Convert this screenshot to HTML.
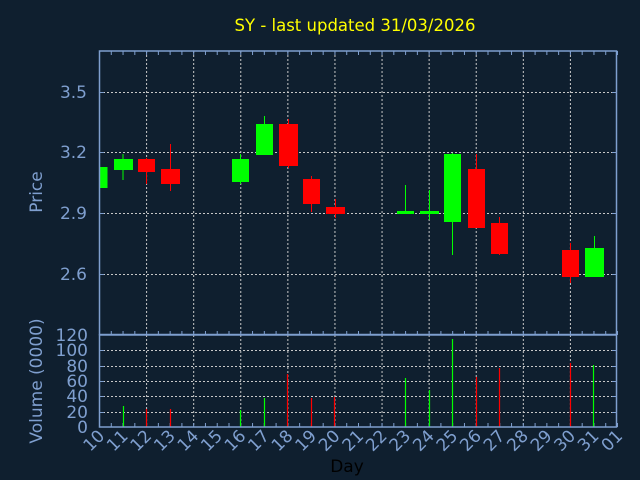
<!DOCTYPE html>
<html><head><meta charset="utf-8"><style>
html,body{margin:0;padding:0;background:#0f1f2f;}
svg{display:block;font-family:"DejaVu Sans","Liberation Sans",sans-serif;}
</style></head><body>
<svg id="s" width="640" height="480" viewBox="0 0 640 480" xmlns="http://www.w3.org/2000/svg">
<rect width="640" height="480" fill="#0f1f2f"/>
<text x="355" y="31" fill="#ffff00" font-size="16.5" text-anchor="middle">SY - last updated 31/03/2026</text>
<g id="grid" stroke="#c8c8c8" stroke-width="1" stroke-dasharray="2,2" fill="none">
<line x1="99" y1="92.5" x2="617" y2="92.5"/>
<line x1="99" y1="152.5" x2="617" y2="152.5"/>
<line x1="99" y1="213.5" x2="617" y2="213.5"/>
<line x1="99" y1="274.5" x2="617" y2="274.5"/>
<line x1="99" y1="350.5" x2="617" y2="350.5"/>
<line x1="99" y1="366.5" x2="617" y2="366.5"/>
<line x1="99" y1="381.5" x2="617" y2="381.5"/>
<line x1="99" y1="396.5" x2="617" y2="396.5"/>
<line x1="99" y1="412.5" x2="617" y2="412.5"/>
</g>
<g id="vg" stroke="#c8c8c8" stroke-width="1" stroke-dasharray="2,2"></g>
<g id="ticks" stroke="#7f9fcf" stroke-width="1"></g>
<g fill="#00ff00" stroke="#00ff00">
<rect x="99" y="167" width="8.5" height="21" stroke="none"/>
<line x1="123" y1="154" x2="123" y2="180"/><rect x="114" y="159" width="19" height="11" stroke="none"/>
<line x1="240.5" y1="154" x2="240.5" y2="184"/><rect x="232" y="159" width="17" height="23" stroke="none"/>
<line x1="264.5" y1="116" x2="264.5" y2="155"/><rect x="256" y="124" width="17" height="31" stroke="none"/>
<line x1="405.5" y1="185" x2="405.5" y2="214"/><rect x="397" y="211" width="17" height="3" stroke="none"/>
<line x1="429.5" y1="190" x2="429.5" y2="220"/><rect x="420" y="211" width="19" height="3" stroke="none"/>
<line x1="452.5" y1="153" x2="452.5" y2="255"/><rect x="444" y="154" width="17" height="68" stroke="none"/>
<line x1="594.5" y1="236" x2="594.5" y2="277"/><rect x="585" y="248" width="19" height="29" stroke="none"/>
</g>
<g fill="#ff0000" stroke="#ff0000">
<line x1="146.5" y1="158" x2="146.5" y2="184"/><rect x="138" y="159" width="17" height="13" stroke="none"/>
<line x1="170.5" y1="144" x2="170.5" y2="191"/><rect x="161" y="169" width="19" height="15" stroke="none"/>
<line x1="288.5" y1="119" x2="288.5" y2="168"/><rect x="279" y="124" width="19" height="42" stroke="none"/>
<line x1="311.5" y1="176" x2="311.5" y2="212"/><rect x="303" y="179" width="17" height="25" stroke="none"/>
<line x1="335.5" y1="199" x2="335.5" y2="218"/><rect x="326" y="207" width="19" height="7" stroke="none"/>
<line x1="476.5" y1="154" x2="476.5" y2="228"/><rect x="468" y="169" width="17" height="59" stroke="none"/>
<line x1="499.5" y1="217" x2="499.5" y2="255"/><rect x="491" y="223" width="17" height="31" stroke="none"/>
<line x1="570.5" y1="243" x2="570.5" y2="283"/><rect x="562" y="250" width="17" height="27" stroke="none"/>
</g>
<g stroke-width="1.2">
<line x1="123.5" y1="406" x2="123.5" y2="427" stroke="#00ff00"/>
<line x1="146.5" y1="409" x2="146.5" y2="427" stroke="#ff0000"/>
<line x1="170.5" y1="409" x2="170.5" y2="427" stroke="#ff0000"/>
<line x1="240.5" y1="410" x2="240.5" y2="427" stroke="#00ff00"/>
<line x1="264.5" y1="398" x2="264.5" y2="427" stroke="#00ff00"/>
<line x1="287.5" y1="374" x2="287.5" y2="427" stroke="#ff0000"/>
<line x1="311.5" y1="398" x2="311.5" y2="427" stroke="#ff0000"/>
<line x1="334.5" y1="397" x2="334.5" y2="427" stroke="#ff0000"/>
<line x1="405.5" y1="378" x2="405.5" y2="427" stroke="#00ff00"/>
<line x1="429.5" y1="390" x2="429.5" y2="427" stroke="#00ff00"/>
<line x1="452.5" y1="339" x2="452.5" y2="427" stroke="#00ff00"/>
<line x1="476.5" y1="377" x2="476.5" y2="427" stroke="#ff0000"/>
<line x1="499.5" y1="368" x2="499.5" y2="427" stroke="#ff0000"/>
<line x1="570.5" y1="363" x2="570.5" y2="427" stroke="#ff0000"/>
<line x1="593.5" y1="365" x2="593.5" y2="427" stroke="#00ff00"/>
</g>
<g fill="none" stroke="#7f9fcf" stroke-width="1.5">
<rect x="99.5" y="51" width="517" height="283.5"/>
<rect x="99.5" y="335" width="517" height="92"/>
</g>
<g fill="#7f9fcf" font-size="17" text-anchor="end">
<text x="87" y="98">3.5</text>
<text x="87" y="158">3.2</text>
<text x="87" y="219">2.9</text>
<text x="87" y="280">2.6</text>
<text x="88" y="341">120</text>
<text x="88" y="356">100</text>
<text x="88" y="372">80</text>
<text x="88" y="387">60</text>
<text x="88" y="402">40</text>
<text x="88" y="418">20</text>
<text x="88" y="433">0</text>
</g>
<g fill="#7f9fcf" font-size="17" text-anchor="middle">
<text transform="translate(42,192) rotate(-90)">Price</text>
<text transform="translate(42,381) rotate(-90)">Volume (0000)</text>
<text x="347" y="472" fill="#000000">Day</text>
</g>
<g id="xl" fill="#7f9fcf" font-size="17" text-anchor="end"></g>
</svg>
<script>
var ns="http://www.w3.org/2000/svg";
function el(p,t,a,tx){var e=document.createElementNS(ns,t);for(var k in a)e.setAttribute(k,a[k]);if(tx)e.textContent=tx;document.getElementById(p).appendChild(e);}
var step=518/22;
for(var i=0;i<=22;i++){var x=99.5+i*step;
 if(i%2==0&&i>0&&i<22){el('vg','line',{x1:x,y1:51,x2:x,y2:334});el('vg','line',{x1:x,y1:335,x2:x,y2:427});}
 var lab=i<22?String(10+i):"01";
 el('xl','text',{transform:'translate('+(x+6)+',437) rotate(-45)'},lab);
}
for(var j=0;j<=44;j++){var x=99.5+j*step/2;
 el('ticks','line',{x1:x,y1:51,x2:x,y2:55});
 el('ticks','line',{x1:x,y1:331,x2:x,y2:335});
 el('ticks','line',{x1:x,y1:423,x2:x,y2:427});
}
[92.5,152.5,213.5,274.5,350.5,366.5,381.5,396.5,412.5].forEach(function(y){el('ticks','line',{x1:612,y1:y,x2:617,y2:y});el('ticks','line',{x1:99,y1:y,x2:104,y2:y});});
</script>
</body></html>
